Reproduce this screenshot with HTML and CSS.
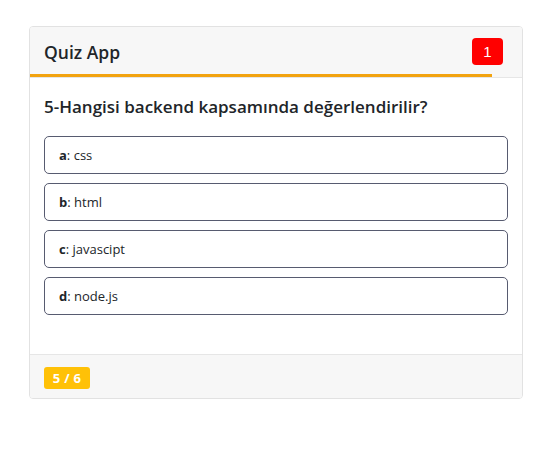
FILE: index.html
```html
<!DOCTYPE html>
<html lang="tr">
<head>
<meta charset="utf-8">
<title>Quiz App</title>
<link rel="stylesheet" href="styles.css">
</head>
<body>
<div class="page">
  <div class="card">
    <div class="card-header">
      <div class="header-row">
        <h1 class="title">Quiz App</h1>
        <span class="timer">1</span>
      </div>
      <div class="progress"><div class="progress-bar" style="width: 93.9%"></div></div>
    </div>
    <div class="card-body">
      <h2 class="question">5-Hangisi backend kapsamında değerlendirilir?</h2>
      <div class="options">
        <div class="option"><b>a</b>: css</div>
        <div class="option"><b>b</b>: html</div>
        <div class="option"><b>c</b>: javascipt</div>
        <div class="option"><b>d</b>: node.js</div>
      </div>
    </div>
    <div class="card-footer">
      <span class="count">5 / 6</span>
    </div>
  </div>
</div>
</body>
</html>
```
FILE: styles.css
```css
* { box-sizing: border-box; }
html, body { margin: 0; padding: 0; background: #fff; }
body {
  font-family: "Open Sans", "Noto Sans", "Liberation Sans", sans-serif;
  color: #212529;
}
.page { padding: 26px 37px 0 29px; }
.card {
  width: 494px;
  border: 1px solid #e2e2e2;
  border-radius: 4px;
  background: #fff;
  overflow: hidden;
}
.card-header {
  background: #f7f7f7;
  border-bottom: 1px solid #e6e6e6;
}
.header-row {
  display: flex;
  justify-content: space-between;
  align-items: center;
  padding: 11px 19px 9px 14px;
}
.title {
  margin: 0;
  font-size: 17.5px;
  font-weight: 600;
  color: #212529;
}
.timer {
  background: #ff0000;
  color: #fff;
  font-family: "Liberation Sans", Arial, sans-serif;
  font-size: 15px;
  width: 31px;
  height: 27px;
  border-radius: 4px;
  display: flex;
  align-items: center;
  justify-content: center;
}
.progress { height: 3px; }
.progress-bar { height: 3px; background: #f2a30f; }
.card-body { padding: 16px 14px 39px 14px; }
.question {
  margin: 0 0 16px 0;
  font-size: 17px;
  font-weight: 600;
  line-height: 26px;
  color: #212529;
}
.options { display: flex; flex-direction: column; gap: 9px; }
.option {
  border: 1px solid #575b70;
  border-radius: 5px;
  height: 38px;
  padding: 0 14px;
  display: flex;
  align-items: center;
  font-size: 13px;
}
.option b { font-weight: 700; }
.card-footer {
  background: #f7f7f7;
  border-top: 1px solid #e6e6e6;
  padding: 11px 14px 9px 14px;
  height: 44px;
}
.count {
  display: inline-flex;
  align-items: center;
  justify-content: center;
  background: #ffc107;
  color: #fff;
  font-weight: 700;
  font-size: 13px;
  letter-spacing: 0.3px;
  width: 46px;
  height: 22px;
  border-radius: 3px;
}
```
